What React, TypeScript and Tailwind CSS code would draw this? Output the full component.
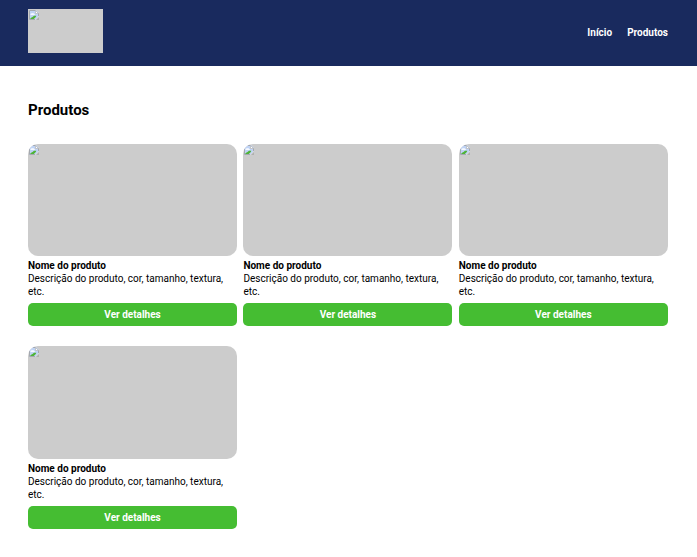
const products = [1, 2, 3, 4];

function BrokenImage() {
  return (
    <svg className="block" width="12" height="12" viewBox="0 0 12 12" aria-hidden="true">
      <path d="M1 1H8L11 4V7L7 11H1Z" fill="#bfd3f5" />
      <path d="M2.5 6V5Q3.2 3.8 4.3 4.3Q5.4 3.4 6 4.8Q7 5 7 6Z" fill="#f5f9ff" />
      <path d="M2 10Q3 8.4 4.5 8L6 6.8H8.3L7.8 8L5.8 10Z" fill="#4fb336" />
      <path d="M7 11L11 7V8L8 11Z" fill="#ddd" />
      <path d="M8 11L11 8V11Z" fill="#b0b0b0" />
      <path d="M7 10.5H1.5V1.5H7.5M10.5 4V7" fill="none" stroke="#a4a8ae" />
      <path d="M7.5 1.5V4.5H10.5Z" fill="#fff" stroke="#b5b5b5" strokeWidth=".7" />
    </svg>
  );
}

function ProductCard() {
  return (
    <article>
      <div className="h-[112.6px] overflow-hidden rounded-[10px] bg-[#ccc]">
        <BrokenImage />
      </div>
      <h2 className="mt-[3.2px] text-[10px] leading-[13px] font-bold">Nome do produto</h2>
      <p className="text-[10px] leading-[13px]">Descrição do produto, cor, tamanho, textura, etc.</p>
      <button className="mt-[4.8px] block h-[23px] w-full rounded-[5px] bg-[#45bd32] text-[10px] leading-[23px] font-bold text-white">
        Ver detalhes
      </button>
    </article>
  );
}

export default function App() {
  return (
    <div className="min-h-screen bg-white font-['Roboto',sans-serif] text-black">
      <header className="flex h-[66px] justify-between bg-[#192a5e] px-7 pr-[29px]">
        <div className="mt-[9px] h-11 w-[75px] bg-[#ccc]">
          <BrokenImage />
        </div>
        <nav className="flex gap-[15px] pt-[26px] text-[10px] leading-[13px] font-bold text-white">
          <a>Início</a>
          <a>Produtos</a>
        </nav>
      </header>
      <main className="px-7 pt-[33.6px]">
        <h1 className="text-[15px] leading-5 font-bold">Produtos</h1>
        <section className="mt-6 grid grid-cols-[209.1px_209.1px_209.1px] gap-x-[6.3px] gap-y-[20.1px]">
          {products.map((id) => (
            <ProductCard key={id} />
          ))}
        </section>
      </main>
    </div>
  );
}
